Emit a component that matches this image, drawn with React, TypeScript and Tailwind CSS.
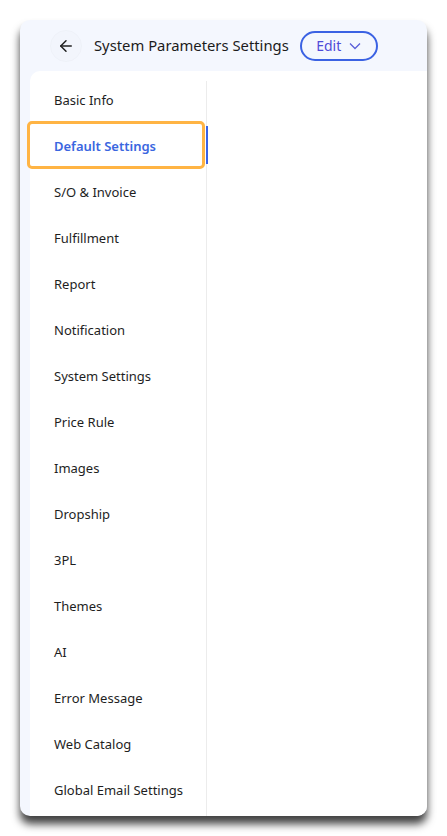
import { ArrowLeft } from 'lucide-react'

const menuItems = [
  'Basic Info',
  'Default Settings',
  'S/O & Invoice',
  'Fulfillment',
  'Report',
  'Notification',
  'System Settings',
  'Price Rule',
  'Images',
  'Dropship',
  '3PL',
  'Themes',
  'AI',
  'Error Message',
  'Web Catalog',
  'Global Email Settings',
]

const active = 'Default Settings'

export default function App() {
  return (
    <div
      className="w-[447px] h-[836px] bg-white pt-[20px] pl-[20px]"
      style={{ fontFamily: '"Noto Sans", "Open Sans", sans-serif' }}
    >
      <div className="w-[407px] h-[796px] rounded-[10px] bg-[#f4f7fe] shadow-[0_8px_9px_rgba(0,0,0,0.75)] flex flex-col overflow-hidden">
        {/* Header */}
        <div className="h-[51px] flex items-center shrink-0">
          <button className="ml-[30px] w-[32px] h-[32px] rounded-full bg-[#f2f5fc] border border-[#eef1f8] flex items-center justify-center text-[#222]">
            <ArrowLeft size={18} strokeWidth={2} />
          </button>
          <h1 className="ml-[12px] text-[14.8px] text-[#1c1c1c]">System Parameters Settings</h1>
          <button className="ml-[11px] h-[30px] w-[78px] rounded-full border-2 border-[#3b62e3] flex items-center justify-center gap-[8px] text-[14px] text-[#4f4ad8]">
            <span>Edit</span>
            <svg width="12" height="8" viewBox="0 0 12 8" fill="none" stroke="#5a5fd8" strokeWidth="1.3">
              <path d="M1 1.5 L6 6.5 L11 1.5" />
            </svg>
          </button>
        </div>

        {/* Body */}
        <div className="ml-[10px] flex-1 bg-white rounded-tl-[10px] flex min-h-0">
          <div className="w-[177px] mt-[10px] border-r border-[#ececec] shrink-0">
            <ul className="-mt-[3px]">
              {menuItems.map((item) => (
                <li
                  key={item}
                  className={
                    item === active
                      ? 'relative h-[46px] flex items-center pl-[24px] text-[13px] font-semibold text-[#3a66e0]'
                      : 'relative h-[46px] flex items-center pl-[24px] text-[13px] text-[#1e1e1e]'
                  }
                >
                  {item}
                  {item === active && (
                    <>
                      <div className="absolute left-[-3px] top-[-3px] w-[178px] h-[48px] rounded-[5px] border-[3px] border-[#ffb444]" />
                      <div className="absolute right-[-2px] top-[2px] w-[2px] h-[38px] bg-[#3a63e6]" />
                    </>
                  )}
                </li>
              ))}
            </ul>
          </div>
          <div className="flex-1" />
        </div>
      </div>
    </div>
  )
}
